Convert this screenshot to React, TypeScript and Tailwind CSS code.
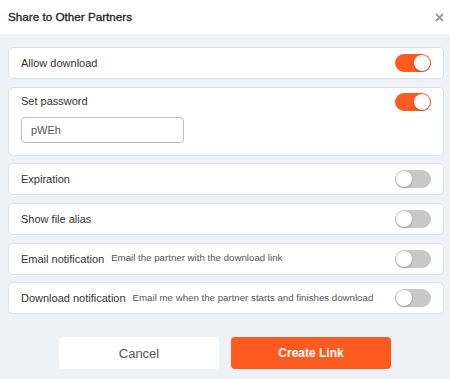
import React, { useState } from "react";

type Row = {
  key: string;
  label: string;
  hint?: string;
  on: boolean;
};

function Toggle({ on, onClick }: { on: boolean; onClick: () => void }) {
  return (
    <button
      onClick={onClick}
      className={`relative h-[18px] w-[36px] shrink-0 rounded-full ${
        on ? "bg-[#ff5a1f]" : "bg-[#c8c8c8]"
      }`}
    >
      <span
        className={`absolute top-[1px] h-[16px] w-[16px] rounded-full bg-white shadow-[0_1px_2px_rgba(0,0,0,0.3)] ${
          on ? "left-[19px]" : "left-[1px]"
        }`}
      />
    </button>
  );
}

export default function App() {
  const [rows, setRows] = useState<Row[]>([
    { key: "download", label: "Allow download", on: true },
    { key: "password", label: "Set password", on: true },
    { key: "expiration", label: "Expiration", on: false },
    { key: "alias", label: "Show file alias", on: false },
    {
      key: "email",
      label: "Email notification",
      hint: "Email the partner with the download link",
      on: false,
    },
    {
      key: "dl",
      label: "Download notification",
      hint: "Email me when the partner starts and finishes download",
      on: false,
    },
  ]);
  const [password, setPassword] = useState("pWEh");

  function toggle(key: string) {
    setRows((r) => r.map((x) => (x.key === key ? { ...x, on: !x.on } : x)));
  }

  return (
    <div className="w-[450px] h-[379px] bg-[#eef1f5] font-['Liberation_Sans',Arial,sans-serif] text-[#333]">
      {/* header */}
      <div className="h-[34px] bg-white flex items-center justify-between pl-[8px] pr-[4px]">
        <h2 className="text-[11.7px] text-[#222] [-webkit-text-stroke:0.3px_#222]">
          Share to Other Partners
        </h2>
        <button className="w-[14px] h-[14px] flex items-center justify-center">
          <svg width="9" height="9" viewBox="0 0 9 9">
            <path d="M1 1L8 8M8 1L1 8" stroke="#999" strokeWidth="1.8" />
          </svg>
        </button>
      </div>

      {/* options */}
      <div className="flex flex-col gap-[7.7px] pl-[8px] pr-[6px] pt-[13px]">
        {rows.map((r) => (
          <div
            key={r.key}
            className="bg-white border border-[#dde2ec] rounded-[5px] px-[12px]"
          >
            <div
              className={`flex items-center justify-between ${
                r.key === "password" ? "pt-[5px]" : "h-[30px]"
              }`}
            >
              <div className="flex items-center gap-[7px] whitespace-nowrap">
                <span className="text-[11px] text-[#333]">{r.label}</span>
                {r.hint && (
                  <span className="text-[9.7px] text-[#555]">{r.hint}</span>
                )}
              </div>
              <Toggle on={r.on} onClick={() => toggle(r.key)} />
            </div>
            {r.key === "password" && (
              <div className="pt-[6px] pb-[12px]">
                <input
                  value={password}
                  onChange={(e) => setPassword(e.target.value)}
                  className="block w-[163px] h-[26px] border border-[#b8bcc4] rounded-[4px] px-[9px] text-[11px] text-[#555] outline-none"
                />
              </div>
            )}
          </div>
        ))}
      </div>

      {/* buttons */}
      <div className="flex justify-center gap-[12px] pt-[23px]">
        <button className="w-[160px] h-[32px] rounded-[4px] bg-white text-[13px] text-[#555]">
          Cancel
        </button>
        <button className="w-[160px] h-[32px] rounded-[4px] bg-[#ff5a1f] text-[12px] font-bold text-white">
          Create Link
        </button>
      </div>
    </div>
  );
}
